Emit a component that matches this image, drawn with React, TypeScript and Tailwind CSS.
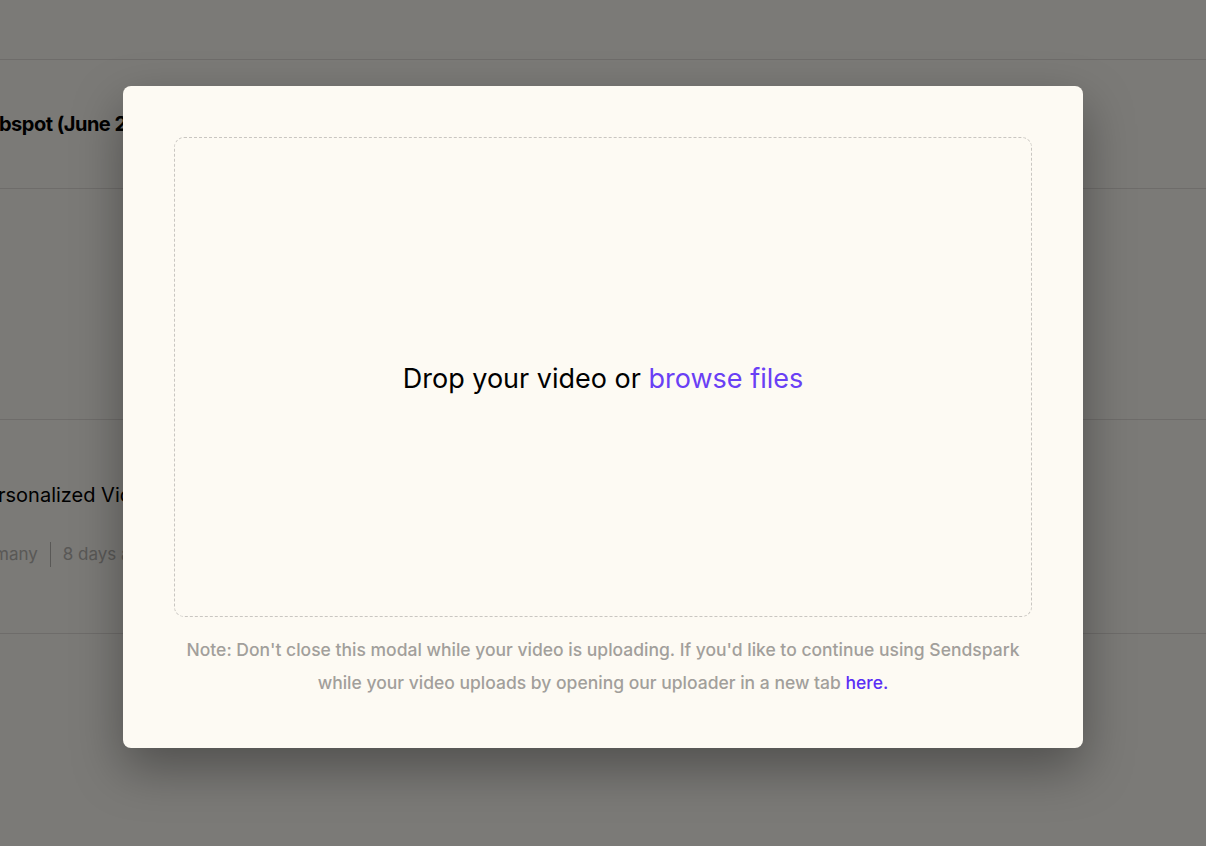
import React from 'react';

const font = { fontFamily: 'Inter, "Noto Sans", sans-serif' };

export default function App() {
  return (
    <div className="relative w-[1206px] h-[846px] overflow-hidden bg-[#f6f4ef]" style={font}>
      {/* Background page */}
      <div className="flex flex-col">
        <div className="h-[60px] border-b border-[#dcd9d4]" />
        <div className="h-[129px] border-b border-[#dcd9d4] flex items-center">
          <span className="text-[20px] font-bold text-black -ml-px tracking-tight">bspot (June 2024)</span>
        </div>
        <div className="h-[231px] border-b border-[#dcd9d4]" />
        <div className="h-[214px] border-b border-[#dcd9d4] flex flex-col pt-[60px]">
          <span className="text-[20px] text-black -ml-[2px]">rsonalized Video</span>
          <div className="flex items-center mt-[32px] text-[17px] text-[#b3b0ac]">
            <span className="-ml-[6px]">many</span>
            <span className="w-px h-[25px] bg-[#b3b0ac] mx-[12px]" />
            <span>8 days ago</span>
          </div>
        </div>
      </div>

      {/* Overlay */}
      <div className="absolute inset-0 bg-black/50 flex items-start justify-center pt-[86px]">
        <div className="w-[960px] bg-[#fdfaf3] rounded-[8px] shadow-[0_20px_50px_rgba(0,0,0,0.35)] px-[51px] pt-[51px] pb-[49px] flex flex-col">
          <div className="h-[480px] border border-dashed border-[#c9c6c1] rounded-[10px] flex items-center justify-center pt-[4px]">
            <p className="text-[27px] text-black">
              Drop your video or <span className="text-[#6a40f5] cursor-pointer">browse files</span>
            </p>
          </div>
          <p className="mt-[16px] text-center text-[17.5px] leading-[33px] font-medium text-[#a29f9b]">
            Note: Don't close this modal while your video is uploading. If you'd like to continue using Sendspark
            <br />
            while your video uploads by opening our uploader in a new tab{' '}
            <a className="text-[#5b2ef5] cursor-pointer">here.</a>
          </p>
        </div>
      </div>
    </div>
  );
}
